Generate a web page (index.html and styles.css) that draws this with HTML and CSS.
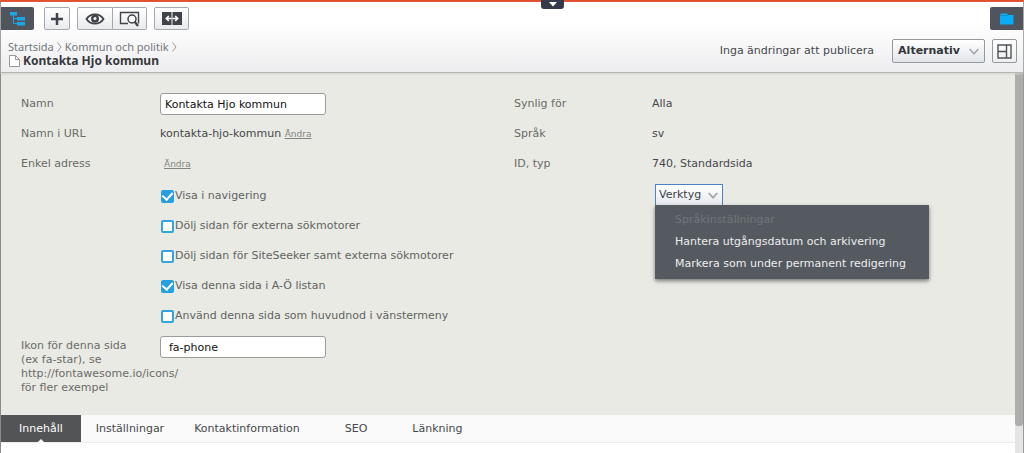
FILE: index.html
```html
<!DOCTYPE html>
<html lang="sv">
<head>
<meta charset="utf-8">
<title>Kontakta Hjo kommun</title>
<link rel="stylesheet" href="styles.css">
</head>
<body>
<div class="app">
  <button class="pull-tab" type="button" aria-label="Visa global meny">
    <svg width="8" height="5" viewBox="0 0 8 5"><path d="M0 0h8L4 4.500z" fill="#fff"/></svg>
  </button>
  <header class="header">
    <div class="toolbar">
      <button class="pane-toggle pane-left" type="button" aria-label="Navigering">
        <svg width="18" height="15" viewBox="0 0 18 15"><g fill="#1ba6e6"><path d="M1 1h7v3.500H1zM8 6h8v3.500H8zM8 11h8v3.500H8z"/></g><path d="M4.500 4v8.500H8M4.500 7.500H8" fill="none" stroke="#1ba6e6"/></svg>
      </button>
      <button class="tool" type="button" aria-label="Skapa ny">
        <svg width="14" height="14" viewBox="0 0 14 14"><path d="M7 1v12M1 7h12" stroke="#40444a" stroke-width="2.500"/></svg>
      </button>
      <div class="tool-group">
        <button class="tool tool-eye" type="button" aria-label="Förhandsgranska">
          <svg width="20" height="12" viewBox="0 0 20 12"><path d="M1.500 6C5.500-.2 14.500-.2 18.500 6 14.500 12.200 5.500 12.200 1.500 6z" fill="#fff" stroke="#40444a" stroke-width="1.800"/><circle cx="10" cy="5.800" r="4" fill="#40444a"/><circle cx="10" cy="5.500" r="1.500" fill="#fff"/></svg>
        </button>
        <button class="tool tool-view" type="button" aria-label="Visningsinställningar">
          <svg width="22" height="17" viewBox="0 0 22 17"><path d="M9 13.500H1.500V2.500h18v11" fill="none" stroke="#40444a" stroke-width="1.400"/><circle cx="13" cy="9" r="4" fill="#f6f6f7" stroke="#40444a" stroke-width="1.500"/><path d="M15.500 11.500l3.500 4.500" stroke="#40444a" stroke-width="2.200"/></svg>
        </button>
      </div>
      <button class="tool tool-compare" type="button" aria-label="Jämför">
        <svg width="20" height="13" viewBox="0 0 20 13"><path d="M0 0h9.500v13H0zM10.500 0H20v13h-9.500z" fill="#40444a"/><path d="M9.500 6.500H5M6.800 4L4.300 6.500l2.500 2.500M10.500 6.500H15M13.200 4l2.500 2.500-2.500 2.500" fill="none" stroke="#fff" stroke-width="1.600"/></svg>
      </button>
      <button class="pane-toggle pane-right" type="button" aria-label="Resurser">
        <svg width="14" height="12" viewBox="0 0 14 12"><path d="M0 1.500V11.500h13.500V2H8L7 .5H1z" fill="#08adf5"/><path d="M0 2.500h7.500" stroke="#0787bf" stroke-width=".7"/></svg>
      </button>
    </div>
    <div class="title-row">
      <div class="heading">
        <nav class="crumbs" aria-label="Sökväg">
          <a href="#">Startsida</a>
          <svg width="5" height="10" viewBox="0 0 5 10"><path d="M.5.5l3.500 4.500-3.500 4.500" fill="none" stroke="#999"/></svg>
          <a href="#">Kommun och politik</a>
          <svg width="5" height="10" viewBox="0 0 5 10"><path d="M.5.5l3.500 4.500-3.500 4.500" fill="none" stroke="#999"/></svg>
        </nav>
        <h1 class="title">
          <svg width="11" height="12" viewBox="0 0 11 12"><path d="M.5.5h6l4 4v7H.5zM6.500.5v4h4" fill="#fff" stroke="#999"/></svg>
          Kontakta Hjo kommun
        </h1>
      </div>
      <span class="status">Inga ändringar att publicera</span>
      <button class="options" type="button">Alternativ
        <svg width="10" height="7" viewBox="0 0 10 7"><path d="M.7 1L5 5.700 9.300 1" fill="none" stroke="#a4a6a9" stroke-width="1.600"/></svg>
      </button>
      <button class="layout-button" type="button" aria-label="Växla vy">
        <svg width="15" height="15" viewBox="0 0 15 15"><path d="M1 1h13v13H1zM9.500 1v13M1 7.500h8.500" fill="none" stroke="#505459" stroke-width="1.400"/></svg>
      </button>
    </div>
  </header>

  <div class="body">
    <main class="content">
      <form class="properties">
        <div class="column">
          <div class="row">
            <label class="label" for="name">Namn</label>
            <input class="field" id="name" type="text" value="Kontakta Hjo kommun">
          </div>
          <div class="row">
            <span class="label">Namn i URL</span>
            <span class="value">kontakta-hjo-kommun <a class="change" href="#">Ändra</a></span>
          </div>
          <div class="row">
            <span class="label">Enkel adress</span>
            <span class="value value-link"><a class="change" href="#">Ändra</a></span>
          </div>
          <div class="checks">
            <label class="check"><input type="checkbox" checked>Visa i navigering</label>
            <label class="check"><input type="checkbox">Dölj sidan för externa sökmotorer</label>
            <label class="check"><input type="checkbox">Dölj sidan för SiteSeeker samt externa sökmotorer</label>
            <label class="check"><input type="checkbox" checked>Visa denna sida i A-Ö listan</label>
            <label class="check"><input type="checkbox">Använd denna sida som huvudnod i vänstermeny</label>
          </div>
          <div class="row row-tall">
            <label class="label" for="icon">Ikon för denna sida (ex fa-star), se http://fontawesome.io/icons/ för fler exempel</label>
            <input class="field field-icon" id="icon" type="text" value="fa-phone">
          </div>
        </div>
        <div class="column">
          <div class="row"><span class="label">Synlig för</span><span class="value">Alla</span></div>
          <div class="row"><span class="label">Språk</span><span class="value">sv</span></div>
          <div class="row"><span class="label">ID, typ</span><span class="value">740, Standardsida</span></div>
          <div class="tools">
            <button class="tools-button" type="button" aria-expanded="true">Verktyg
              <svg width="10" height="7" viewBox="0 0 10 7"><path d="M.7 1L5 5.700 9.300 1" fill="none" stroke="#a4a6a9" stroke-width="1.800"/></svg>
            </button>
            <div class="menu" role="menu">
              <button class="menu-item" type="button" role="menuitem" disabled>Språkinställningar</button>
              <button class="menu-item" type="button" role="menuitem">Hantera utgångsdatum och arkivering</button>
              <button class="menu-item" type="button" role="menuitem">Markera som under permanent redigering</button>
            </div>
          </div>
        </div>
      </form>
      <div class="tabs" role="tablist">
        <button class="tab tab-active" type="button" role="tab" aria-selected="true">Innehåll</button>
        <button class="tab" type="button" role="tab">Inställningar</button>
        <button class="tab" type="button" role="tab">Kontaktinformation</button>
        <button class="tab tab-wide" type="button" role="tab">SEO</button>
        <button class="tab" type="button" role="tab">Länkning</button>
      </div>
    </main>
    <div class="scrollbar"><div class="thumb"></div></div>
  </div>
</div>
</body>
</html>
```
FILE: styles.css
```css
* { box-sizing: border-box; }
body {
  margin: 0;
  background: #fff;
  color: #45484c;
  font: 11px/14px Verdana, "DejaVu Sans", sans-serif;
}
button, input { font: inherit; color: inherit; margin: 0; }
button {
  display: flex;
  align-items: center;
  justify-content: center;
  padding: 0;
  border: 0;
  background: none;
}
svg { flex: none; display: block; }

.app {
  display: flex;
  flex-direction: column;
  min-height: 100vh;
  border-top: 2px solid #e4502e;
  border-left: 1px solid #8b8b8b;
  border-right: 1px solid #999;
  position: relative;
}
.pull-tab {
  position: absolute;
  z-index: 1;
  top: -2px;
  left: calc(50% + 29px);
  width: 23px;
  height: 9px;
  border-radius: 0 0 3px 3px;
  background: #343a47;
}

.header {
  padding-top: 5px;
  background: linear-gradient(#fff 30%, #ededef);
  border-bottom: 1px solid #b5b6b6;
  box-shadow: 0 1px 2px #cfd0ca;
  position: relative;
}
.header .pane-toggle { height: 23px; background: #50555d; }
.toolbar { display: flex; align-items: center; gap: 10px; }
.pane-left { width: 33px; border-radius: 0 2px 2px 0; }
.pane-right { width: 33px; margin-left: auto; border-radius: 2px 0 0 2px; }
.tool {
  width: 26px;
  height: 23px;
  border: 1px solid #a5a8ad;
  border-radius: 2px;
  background: linear-gradient(#fff, #e9eaec);
}
.tool-group { display: flex; margin-left: -3px; margin-right: -3px; }
.toolbar .tool { flex: none; }
.tool-group .tool { width: 36px; }
.tool-group .tool-eye { border-radius: 2px 0 0 2px; }
.tool-group .tool-view { border-left: 0; width: 34px; border-radius: 0 2px 2px 0; }
.toolbar .tool-compare { width: 35px; }
.title-row { display: flex; align-items: flex-start; padding: 9px 7px 4px; }
.heading { flex: 1; font-family: "Noto Sans", sans-serif; }
.crumbs { display: flex; align-items: center; gap: 3px; font-size: 11px; line-height: 15px; }
.crumbs a { color: #73777b; text-decoration: none; }
.title {
  display: flex;
  align-items: center;
  gap: 3px;
  margin: 0;
  padding-left: 1px;
  font-size: 12px;
  line-height: 14px;
  color: #36383b;
}
.status { margin-right: 18px; line-height: 24px; }
.options {
  gap: 9px;
  height: 24px;
  padding: 0 5px;
  margin-right: 7px;
  border: 1px solid #95989d;
  border-radius: 2px;
  background: linear-gradient(#fff, #e2e5e9);
  color: #33363a;
  font-weight: bold;
}
.layout-button {
  width: 25px;
  height: 24px;
  margin-right: -1px;
  border: 1px solid #95989d;
  border-radius: 2px;
  background: linear-gradient(#fff, #eeeff0);
}

.body { flex: 1; display: flex; }
.content { flex: 1; min-width: 0; }
.properties {
  display: grid;
  grid-template-columns: 1fr 1fr;
  padding: 16px 8px 20px 20px;
  background: #e9eae3;
}
.row { display: flex; align-items: center; height: 30px; }
.label { flex: none; width: 139px; padding-right: 20px; color: #696b69; }
.column + .column .label { width: 138px; }
.field {
  width: 166px;
  height: 22px;
  padding: 0 4px;
  border: 1px solid #9a9c9c;
  border-radius: 3px;
  background: #fff;
  color: #111;
}
.field-icon { padding-left: 8px; }
.change { color: #828583; font-size: 9px; text-decoration: underline; }
.value-link { padding-left: 4px; }
.checks { padding: 2px 0 2px 140px; }
.check { display: flex; align-items: center; gap: 1px; height: 30px; color: #626462; white-space: nowrap; }
.check input {
  appearance: none;
  width: 13px;
  height: 13px;
  border: 2px solid #35a3dc;
  border-radius: 2px;
  background: #fff;
}
.check input:checked {
  border: 0;
  background: #269fe0;
  display: grid;
  place-items: center;
}
.check input:checked::after {
  content: "";
  width: 5px;
  height: 8px;
  margin-bottom: 2px;
  border: solid #fff;
  border-width: 0 2px 2px 0;
  transform: rotate(42deg);
}
.row-tall { height: auto; align-items: flex-start; padding-top: 3px; }
.row-tall .label { padding-top: 3px; line-height: 14px; }
.tools { position: relative; margin-left: 141px; padding-top: 5px; }
.tools-button {
  gap: 7px;
  height: 22px;
  padding: 0 4px 0 3px;
  border: 1px solid #4c82c3;
  background: linear-gradient(#fff, #e6e9ee);
  color: #3d4045;
}
.menu {
  position: absolute;
  top: 26px;
  left: 0;
  padding: 4px 23px 4px 20px;
  background: #555a61;
  box-shadow: 0 2px 4px #777;
}
.menu-item { height: 22px; color: #eceded; white-space: nowrap; }
.menu-item:disabled { color: #70757b; }

.tabs {
  display: flex;
  height: 28px;
  background: #fafafa;
  border-bottom: 1px solid #ececec;
}
.tab { padding: 1px 15px 0; color: #45484a; }
.tab-wide { padding: 1px 30px 0; }
.tab-active {
  position: relative;
  padding: 1px 18px 0;
  background: #535456;
  color: #fff;
}
.tab-active::after {
  content: "";
  position: absolute;
  bottom: -1px;
  left: calc(50% - 4px);
  border: 4px solid transparent;
  border-top: 0;
  border-bottom-color: #fff;
}
.scrollbar { width: 8px; background: #e4e4e4; }
.thumb { height: 93%; border-radius: 0 0 3px 3px; background: #adadad; }
```
